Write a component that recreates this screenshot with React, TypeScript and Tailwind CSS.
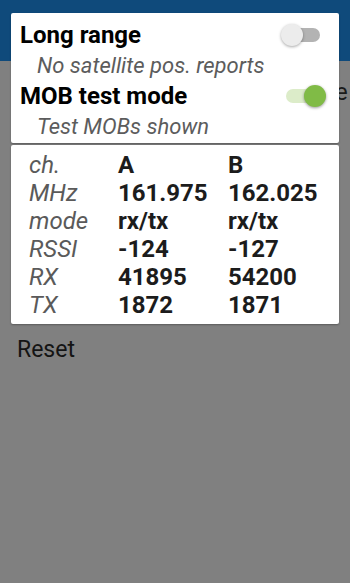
import React from "react";

const font = { fontFamily: "Roboto, 'Noto Sans', sans-serif" };

function Toggle({ on }: { on: boolean }) {
  return (
    <div className="relative w-[45px] h-[24px] flex items-center">
      <div
        className={
          on
            ? "ml-[5px] w-[34px] h-[14px] rounded-full bg-[#dcecc9]"
            : "ml-[5px] w-[34px] h-[14px] rounded-full bg-[#b3b3b3]"
        }
      />
      <div
        className={
          on
            ? "absolute left-[23px] top-[1px] w-[22px] h-[22px] rounded-full bg-[#80bb46] shadow-[0_1px_3px_rgba(0,0,0,0.4)]"
            : "absolute left-0 top-[1px] w-[22px] h-[22px] rounded-full bg-[#ececec] shadow-[0_1px_3px_rgba(0,0,0,0.35)]"
        }
      />
    </div>
  );
}

function SwitchRow({ title, sub, on }: { title: string; sub: string; on: boolean }) {
  return (
    <div>
      <div className="flex items-center justify-between h-[32px]">
        <span className="text-[24px] font-bold text-black leading-[32px]">{title}</span>
        <Toggle on={on} />
      </div>
      <div className="pl-[17px] h-[29px] text-[22px] italic text-[#5c5c5c] leading-[29px] whitespace-nowrap">{sub}</div>
    </div>
  );
}

const rows = [
  ["ch.", "A", "B"],
  ["MHz", "161.975", "162.025"],
  ["mode", "rx/tx", "rx/tx"],
  ["RSSI", "-124", "-127"],
  ["RX", "41895", "54200"],
  ["TX", "1872", "1871"],
];

export default function App() {
  return (
    <div className="relative w-[350px] h-[583px] overflow-hidden bg-[#808080]" style={font}>
      <div className="h-[61px] bg-[#0f4a7b]" />
      <div className="h-[45px] pt-[17px] pl-[335px] overflow-hidden whitespace-nowrap">
        <span className="text-[24px] text-[#1a1a1a] leading-[28px]">e</span>
      </div>
      <div className="pl-[17px] pt-[230px] text-[23px] text-[#141414] leading-[28px]">Reset</div>

      {/* dialog */}
      <div className="absolute left-[11px] top-[13px] w-[328px] flex flex-col gap-[2px]">
        <div className="bg-white rounded-[2px] shadow-[0_1px_2px_rgba(0,0,0,0.3)] pl-[9px] pr-[13px] pt-[6px] pb-[2px] flex flex-col">
          <SwitchRow title="Long range" sub="No satellite pos. reports" on={false} />
          <SwitchRow title="MOB test mode" sub="Test MOBs shown" on={true} />
        </div>
        <div className="bg-white rounded-[2px] shadow-[0_1px_2px_rgba(0,0,0,0.3)] pl-[18px] pt-[6px] pb-[5px]">
          {rows.map(([label, a, b]) => (
            <div key={label} className="grid grid-cols-[89px_110px_1fr] h-[28px] leading-[28px] text-[24px]">
              <span className="italic text-[#5a5a5a]">{label}</span>
              <span className="font-bold text-[#1c1c1c]">{a}</span>
              <span className="font-bold text-[#1c1c1c]">{b}</span>
            </div>
          ))}
        </div>
      </div>
    </div>
  );
}
